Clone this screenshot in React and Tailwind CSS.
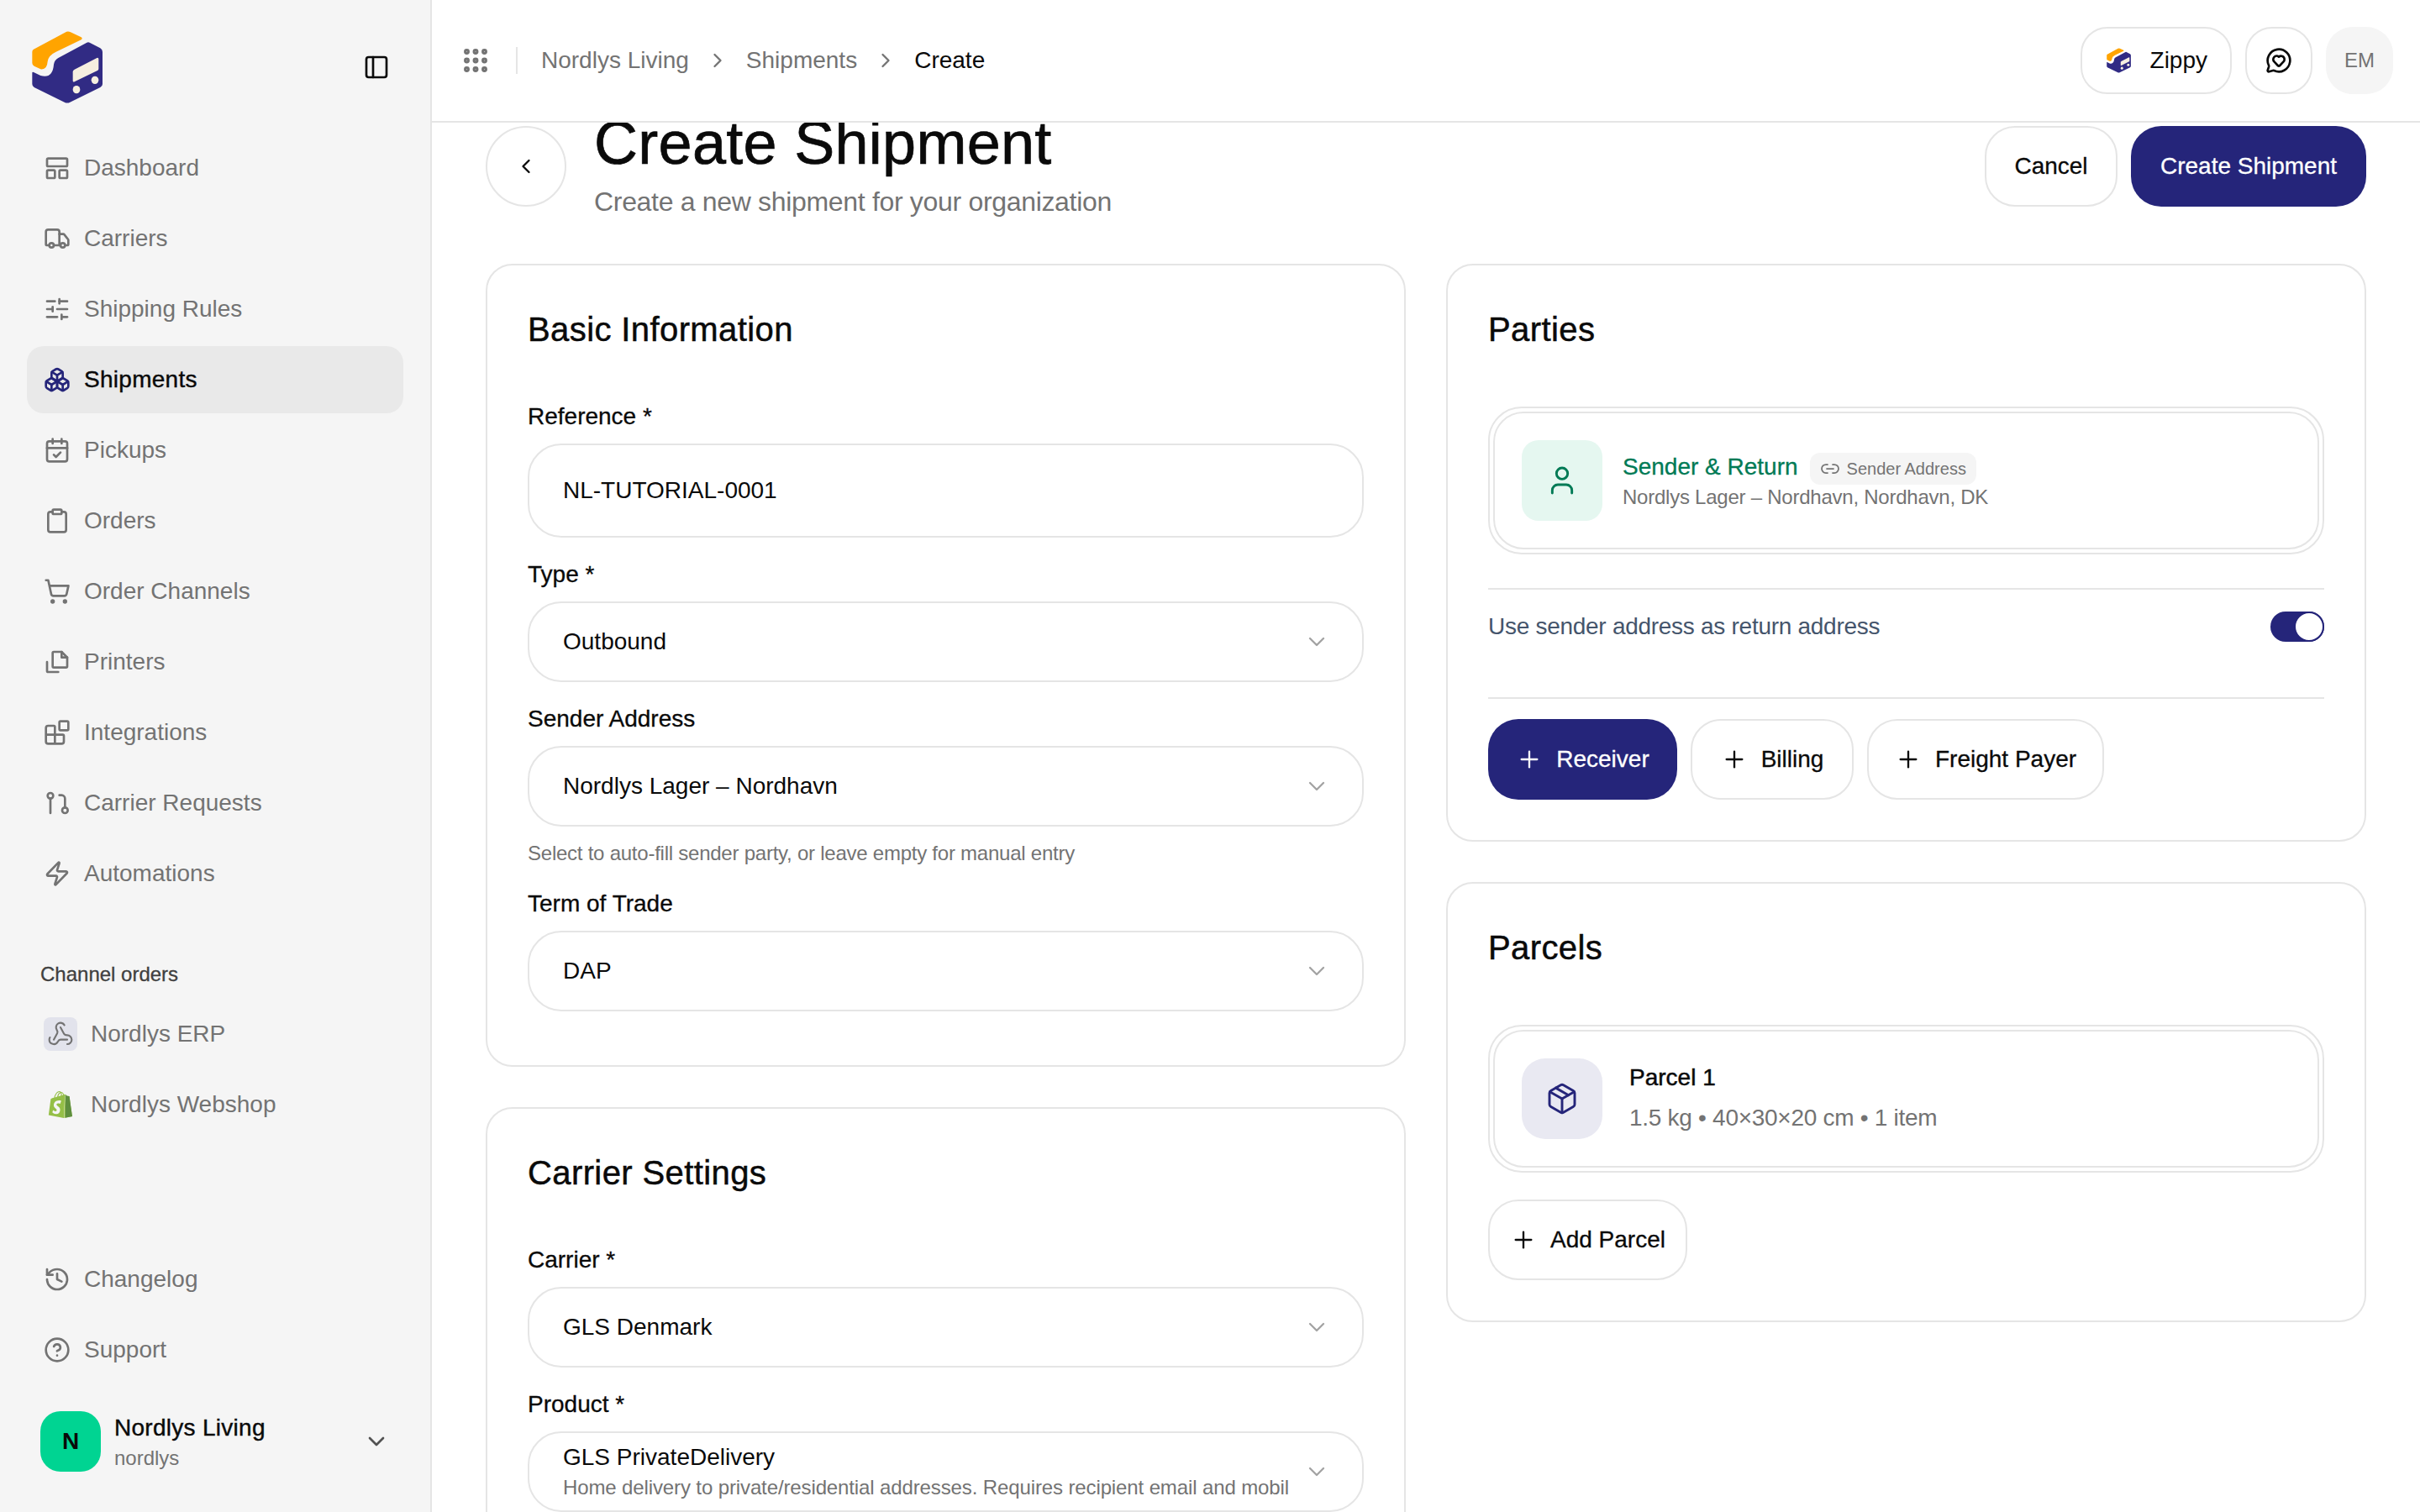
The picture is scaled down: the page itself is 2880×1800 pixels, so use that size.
import {
  Truck, SlidersHorizontal, Boxes, CalendarCheck, Clipboard, ShoppingCart, Blocks, Zap, History, CircleHelp,
  PanelLeft, Grip, ChevronRight, ChevronLeft, ChevronDown, MessageCircleHeart, Link2, User, Package, Plus, Webhook,
} from "lucide-react";
import { SiShopify } from "react-icons/si";

const Logo = ({ className }) => (
  <svg viewBox="45 40 270 280" className={className}>
    <path d="M60 116 L172 56 Q182 50 192 55 L230 73 Q236 78 230 82 L140 125 Q112 138 110 160 Q108 190 85 187 L62 176 Q55 172 55 165 L55 125 Q55 119 60 116 Z" fill="#ffa400" />
    <path d="M250 92 Q255 90 260 92 L298 112 Q306 117 306 125 L306 240 Q306 248 298 252 L190 305 Q180 310 170 305 L62 252 Q55 248 55 240 L55 200 Q55 196 60 198 L85 210 Q128 222 132 170 Q134 155 148 147 Z" fill="#312b84" />
    <path d="M206 188 L286 147 Q292 145 292 151 L292 186 Q292 190 288 192 L206 232 Q200 234 200 228 L200 196 Q200 191 206 188 Z" fill="#f6efe0" />
    <ellipse cx="213" cy="260" rx="13" ry="14" fill="#f6efe0" />
    <ellipse cx="279" cy="226" rx="13" ry="14" fill="#f6efe0" />
  </svg>
);

const DashboardIcon = ({ className }) => (
  <svg viewBox="0 0 24 24" fill="none" stroke="currentColor" strokeWidth="2" strokeLinejoin="round" className={className}>
    <rect x="3" y="3.5" width="18" height="7" rx="1" />
    <rect x="3" y="14" width="7" height="7" rx="1" />
    <rect x="14" y="14" width="7" height="7" rx="1" />
  </svg>
);

const PrintersIcon = ({ className }) => (
  <svg viewBox="0 0 24 24" fill="none" stroke="currentColor" strokeWidth="2" strokeLinecap="round" strokeLinejoin="round" className={className}>
    <path d="M3 12v8a1 1 0 0 0 1 1h9" />
    <path d="M8 5v11a1 1 0 0 0 1 1h11a1 1 0 0 0 1-1V8l-5-5H9a1 1 0 0 0-1 1z" />
    <path d="M16 3v5h5" />
  </svg>
);

const RequestsIcon = ({ className }) => (
  <svg viewBox="0 0 24 24" fill="none" stroke="currentColor" strokeWidth="2" strokeLinecap="round" strokeLinejoin="round" className={className}>
    <circle cx="6" cy="5.5" r="2.5" />
    <path d="M6 8v13" />
    <path d="M14 5h2a3 3 0 0 1 3 3v8" />
    <circle cx="19" cy="18.5" r="2.5" />
  </svg>
);

const navItems = [
  { name: "Dashboard", icon: DashboardIcon },
  { name: "Carriers", icon: Truck },
  { name: "Shipping Rules", icon: SlidersHorizontal },
  { name: "Shipments", icon: Boxes, active: true },
  { name: "Pickups", icon: CalendarCheck },
  { name: "Orders", icon: Clipboard },
  { name: "Order Channels", icon: ShoppingCart },
  { name: "Printers", icon: PrintersIcon },
  { name: "Integrations", icon: Blocks },
  { name: "Carrier Requests", icon: RequestsIcon },
  { name: "Automations", icon: Zap },
];

const NavItem = ({ name, icon: Icon, active }) => (
  <a className={`flex h-20 items-center gap-4 rounded-[20px] px-5 text-[28px] ${active ? "bg-[#e9e9e9] text-[#0a0a0a] tracking-[0.01em] [-webkit-text-stroke:0.4px]" : "text-[#737373]"}`}>
    <Icon className={`h-8 w-8 shrink-0 ${active ? "text-[#25257a]" : "text-[#737373]"}`} />
    <span>{name}</span>
  </a>
);

const Sidebar = () => (
  <aside className="flex h-full w-[514px] shrink-0 flex-col border-r-2 border-[#e5e5e5] bg-[#f5f5f5]">
    <div className="flex h-[160px] shrink-0 items-center justify-between pl-[35px] pr-12">
      <Logo className="h-[94px] w-[90px]" />
      <PanelLeft className="h-8 w-8 text-[#0a0a0a]" />
    </div>

    <nav className="flex flex-col gap-1 px-8">
      {navItems.map((item) => (
        <NavItem key={item.name} {...item} />
      ))}
    </nav>

    <div className="mt-[64px] pl-12 text-[24px] leading-8 text-[#404040] [-webkit-text-stroke:0.3px]">Channel orders</div>
    <div className="mt-[15px] flex flex-col gap-1 px-8">
      <a className="flex h-20 items-center gap-4 px-5 text-[28px] text-[#737373]">
        <span className="flex h-10 w-10 items-center justify-center rounded-lg bg-[#e2e3ec]">
          <Webhook className="h-8 w-8 text-[#737373]" strokeWidth={1.6} />
        </span>
        Nordlys ERP
      </a>
      <a className="flex h-20 items-center gap-4 px-5 text-[28px] text-[#737373]">
        <span className="relative flex h-10 w-10 items-center justify-center">
          <SiShopify className="h-8 w-8 text-[#95bf47]" />
          <SiShopify className="absolute left-1 top-1 h-8 w-8 text-[#5e8e3e] [clip-path:inset(0_0_0_68%)]" />
        </span>
        Nordlys Webshop
      </a>
    </div>

    <div className="mt-auto flex flex-col gap-1 px-8">
      <NavItem name="Changelog" icon={History} />
      <NavItem name="Support" icon={CircleHelp} />
    </div>

    <div className="mb-12 mt-[33px] flex h-[72px] items-center gap-4 pl-12 pr-12">
      <div className="flex h-[72px] w-[72px] items-center justify-center rounded-[24px] bg-[#00d492] text-[28px] font-bold text-[#0a0a0a]">N</div>
      <div className="flex flex-col">
        <span className="text-[28px] leading-10 tracking-[0.01em] text-[#0a0a0a] [-webkit-text-stroke:0.4px]">Nordlys Living</span>
        <span className="text-[24px] leading-8 text-[#737373]">nordlys</span>
      </div>
      <ChevronDown className="ml-auto h-8 w-8 text-[#525252]" />
    </div>
  </aside>
);

const Header = () => (
  <header className="flex h-[146px] shrink-0 items-center border-b-2 border-[#e5e5e5] bg-white pl-[34px] pr-8">
    <Grip className="h-9 w-9 text-[#737373]" strokeWidth={2.6} />
    <div className="ml-[30px] h-8 w-0.5 bg-[#e5e5e5]" />
    <div className="ml-[28px] flex items-center gap-5 text-[28px] text-[#737373]">
      <span>Nordlys Living</span>
      <ChevronRight className="h-7 w-7" />
      <span>Shipments</span>
      <ChevronRight className="h-7 w-7" />
      <span className="text-[#0a0a0a]">Create</span>
    </div>
    <div className="ml-auto flex items-center gap-4">
      <button className="flex h-20 items-center gap-[22px] rounded-[32px] border-2 border-[#e5e5e5] pl-[28px] pr-[27px] text-[28px] text-[#0a0a0a]">
        <Logo className="h-[32px] w-[31px]" />
        Zippy
      </button>
      <button className="flex h-20 w-20 items-center justify-center rounded-[32px] border-2 border-[#e5e5e5]">
        <MessageCircleHeart className="h-8 w-8 text-[#0a0a0a]" />
      </button>
      <div className="flex h-20 w-20 items-center justify-center rounded-[32px] bg-[#f5f5f5] text-[24px] text-[#737373]">EM</div>
    </div>
  </header>
);

const Card = ({ title, children }) => (
  <section className="rounded-[32px] border-2 border-[#e5e5e5] bg-white px-12 pb-16 pt-12">
    <h2 className="text-[40px] leading-14 tracking-[0.01em] text-[#0a0a0a] [-webkit-text-stroke:0.5px]">{title}</h2>
    {children}
  </section>
);

const Label = ({ children }) => (
  <label className="block text-[28px] leading-10 text-[#0a0a0a] [-webkit-text-stroke:0.3px]">{children}</label>
);

const Select = ({ value, hint }) => (
  <div className="mt-3 flex h-24 items-center justify-between rounded-[40px] border-2 border-[#e5e5e5] pl-[40px] pr-[38px]">
    <div className={`w-[864px] overflow-hidden whitespace-nowrap ${hint ? "pt-[2px]" : ""}`}>
      <div className={`text-[28px] text-[#0a0a0a] ${hint ? "leading-9" : ""}`}>{value}</div>
      {hint && <div className="text-[24px] leading-9 tracking-[-0.005em] text-[#737373]">{hint}</div>}
    </div>
    <ChevronDown className="h-8 w-8 shrink-0 text-[#a3a3a3]" strokeWidth={1.75} />
  </div>
);

const AddButton = ({ children, primary, className }) => (
  <button
    className={`flex h-24 items-center justify-center gap-4 rounded-[36px] text-[28px] [-webkit-text-stroke:0.3px] ${
      primary ? "bg-[#25257a] text-white" : "border-2 border-[#e5e5e5] bg-white text-[#0a0a0a]"
    } ${className}`}
  >
    <Plus className="h-8 w-8" strokeWidth={1.75} />
    {children}
  </button>
);

// double outline used by the party and parcel rows
const RowBox = ({ children }) => (
  <div className="rounded-[40px] border-2 border-[#e5e5e5] p-1">
    <div className="flex items-center rounded-[36px] border-2 border-[#e5e5e5] p-8">{children}</div>
  </div>
);

const Content = () => (
  <main className="min-h-0 flex-1 overflow-hidden bg-white px-16">
    <div className="-mt-4 flex h-[136px] items-center">
      <button className="flex h-24 w-24 shrink-0 items-center justify-center rounded-full border-2 border-[#e5e5e5]">
        <ChevronLeft className="h-7 w-7 text-[#0a0a0a]" />
      </button>
      <div className="ml-[33px]">
        <h1 className="text-[72px] leading-20 tracking-[0.004em] text-[#0a0a0a] [-webkit-text-stroke:0.7px]">Create Shipment</h1>
        <p className="mt-[6px] pb-[2px] text-[32px] leading-12 tracking-[-0.01em] text-[#737373]">Create a new shipment for your organization</p>
      </div>
      <div className="ml-auto flex items-center gap-4">
        <button className="h-24 w-[158px] rounded-[36px] border-2 border-[#e5e5e5] text-[28px] text-[#0a0a0a] [-webkit-text-stroke:0.3px]">Cancel</button>
        <button className="h-24 w-[280px] rounded-[36px] bg-[#25257a] text-[28px] text-white [-webkit-text-stroke:0.3px]">Create Shipment</button>
      </div>
    </div>

    <div className="mt-12 grid grid-cols-2 gap-12">
      <div className="flex flex-col gap-12">
        <Card title="Basic Information">
          <div className="mt-14">
            <Label>Reference *</Label>
            <div className="mt-3 flex h-28 items-center rounded-[40px] border-2 border-[#e5e5e5] px-[40px] text-[28px] text-[#0a0a0a]">NL-TUTORIAL-0001</div>
          </div>
          <div className="mt-6">
            <Label>Type *</Label>
            <Select value="Outbound" />
          </div>
          <div className="mt-6">
            <Label>Sender Address</Label>
            <Select value="Nordlys Lager – Nordhavn" />
            <p className="mt-4 text-[24px] leading-8 tracking-[-0.01em] text-[#737373]">Select to auto-fill sender party, or leave empty for manual entry</p>
          </div>
          <div className="mt-6">
            <Label>Term of Trade</Label>
            <Select value="DAP" />
          </div>
        </Card>
        <Card title="Carrier Settings">
          <div className="mt-14">
            <Label>Carrier *</Label>
            <Select value="GLS Denmark" />
          </div>
          <div className="mt-6">
            <Label>Product *</Label>
            <Select value="GLS PrivateDelivery" hint="Home delivery to private/residential addresses. Requires recipient email and mobile" />
          </div>
        </Card>
      </div>

      <div className="flex flex-col items-stretch gap-12 self-start">
        <section className="rounded-[32px] border-2 border-[#e5e5e5] bg-white px-12 pb-12 pt-12">
          <h2 className="text-[40px] leading-14 tracking-[0.01em] text-[#0a0a0a] [-webkit-text-stroke:0.5px]">Parties</h2>
          <div className="mt-16">
            <RowBox>
              <div className="flex h-24 w-24 shrink-0 items-center justify-center rounded-[20px] bg-[#e5f7f0]">
                <User className="h-10 w-10 text-[#007a55]" strokeWidth={1.75} />
              </div>
              <div className="ml-6">
                <div className="flex h-10 items-center gap-[14px]">
                  <span className="text-[28px] leading-10 text-[#007a55] [-webkit-text-stroke:0.3px]">Sender &amp; Return</span>
                  <span className="mt-1 flex h-[38px] items-center gap-2 rounded-xl bg-[#f5f5f5] px-3 text-[20px] text-[#737373]">
                    <Link2 className="h-6 w-6" strokeWidth={1.75} />
                    Sender Address
                  </span>
                </div>
                <div className="text-[24px] leading-8 tracking-[-0.01em] text-[#737373]">Nordlys Lager – Nordhavn, Nordhavn, DK</div>
              </div>
            </RowBox>
          </div>
          <div className="mt-10 border-t-2 border-[#e5e5e5] pb-16 pt-6">
            <div className="flex h-10 items-center justify-between">
              <span className="text-[28px] tracking-[-0.01em] text-[#45556c]">Use sender address as return address</span>
              <span className="flex h-9 w-16 justify-end rounded-full bg-[#25257a]">
                <span className="h-9 w-9 rounded-full border-2 border-[#25257a] bg-white" />
              </span>
            </div>
          </div>
          <div className="border-t-2 border-[#e5e5e5] pt-6">
            <div className="flex gap-4">
              <AddButton primary className="w-[225px]">Receiver</AddButton>
              <AddButton className="w-[194px]">Billing</AddButton>
              <AddButton className="w-[282px]">Freight Payer</AddButton>
            </div>
          </div>
        </section>

        <section className="rounded-[32px] border-2 border-[#e5e5e5] bg-white px-12 pb-12 pt-12">
          <h2 className="text-[40px] leading-14 tracking-[0.01em] text-[#0a0a0a] [-webkit-text-stroke:0.5px]">Parcels</h2>
          <div className="mt-16">
            <RowBox>
              <div className="flex h-24 w-24 shrink-0 items-center justify-center rounded-[28px] bg-[#e9e9f2]">
                <Package className="h-10 w-10 text-[#25257a]" strokeWidth={1.75} />
              </div>
              <div className="ml-8 pb-[3px]">
                <div className="text-[28px] leading-10 text-[#0a0a0a] [-webkit-text-stroke:0.5px]">Parcel 1</div>
                <div className="mt-2 text-[28px] leading-10 tracking-[-0.01em] text-[#737373]">1.5 kg • 40×30×20 cm • 1 item</div>
              </div>
            </RowBox>
          </div>
          <AddButton className="mt-8 w-[237px]">Add Parcel</AddButton>
        </section>
      </div>
    </div>
  </main>
);

export default function App() {
  return (
    <div className="flex h-screen overflow-hidden bg-white font-['Liberation_Sans',sans-serif]">
      <Sidebar />
      <div className="flex min-w-0 flex-1 flex-col">
        <Header />
        <Content />
      </div>
    </div>
  );
}
